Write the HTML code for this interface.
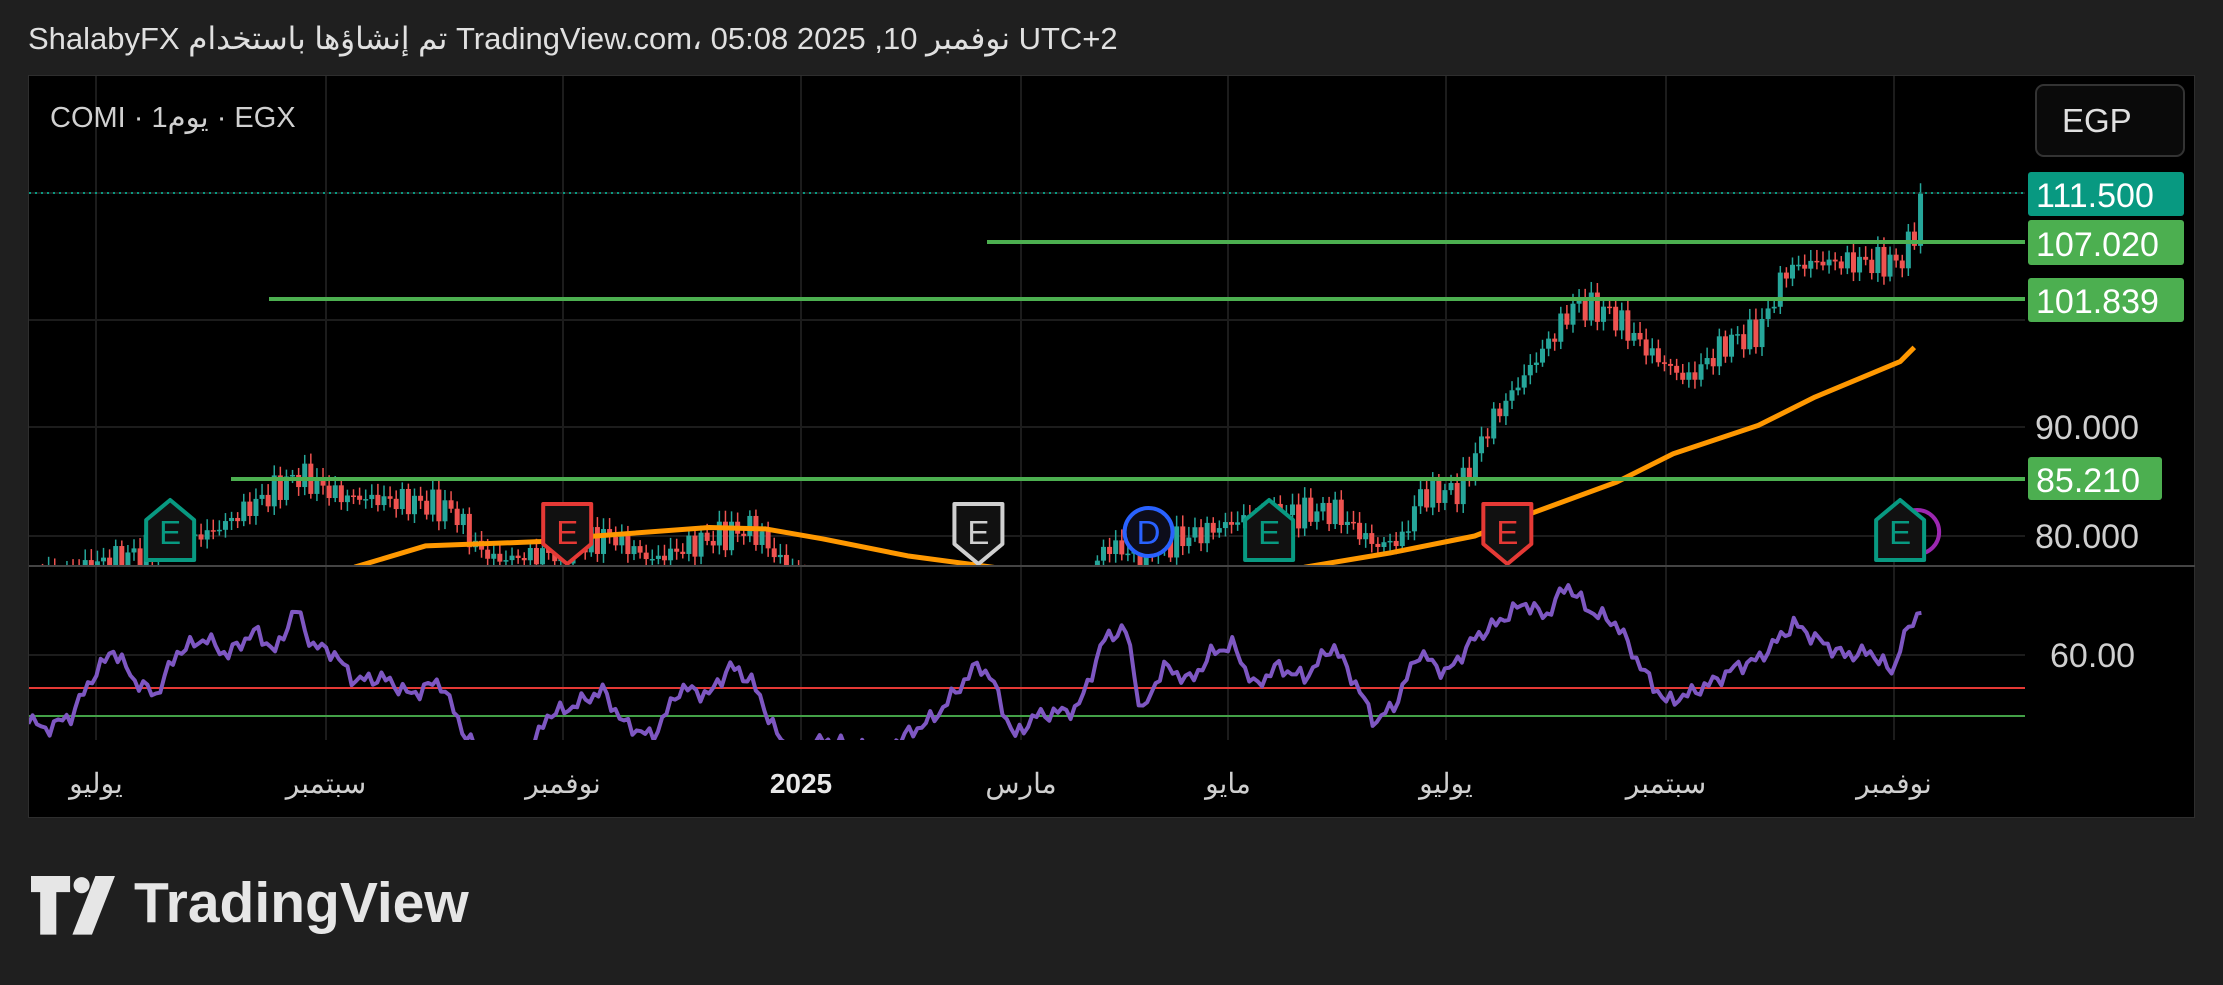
<!DOCTYPE html>
<html><head><meta charset="utf-8">
<style>
html,body{margin:0;padding:0;background:#1f1f1f;width:2223px;height:985px;overflow:hidden}
body{font-family:"Liberation Sans","Noto Sans CJK SC",sans-serif;color:#dbdbdb}
#hdr{position:absolute;left:28px;top:21px;font-size:31px;color:#e0e0e0;white-space:nowrap}
#panel{position:absolute;left:28px;top:75px;width:2167px;height:743px;background:#000;border:1px solid #2e2e2e;box-sizing:border-box}
svg{position:absolute;left:0;top:0}
</style></head><body>
<div id="hdr">ShalabyFX تم إنشاؤها باستخدام TradingView.com، 05:08 2025 ,10 نوفمبر UTC+2</div>
<div id="panel"></div>
<svg id="s" width="2223" height="985" xmlns="http://www.w3.org/2000/svg">
<defs>
<clipPath id="main"><rect x="29" y="76" width="1996" height="490"/></clipPath>
<clipPath id="rsi"><rect x="29" y="567" width="1996" height="173"/></clipPath>
</defs>
<g id="grid" stroke="#1c1c1c" stroke-width="2"></g>
<g id="chart"></g>
<text x="50" y="127" font-size="29" fill="#d0d0d0" font-family="Liberation Sans,Noto Sans CJK SC,sans-serif">COMI · 1يوم · EGX</text>
<rect x="2036" y="85" width="148" height="71" rx="8" fill="#0a0a0a" stroke="#333" stroke-width="2"/>
<text x="2062" y="132" font-size="33" fill="#e0e0e0" font-family="Liberation Sans,sans-serif">EGP</text>
<g font-family="Liberation Sans,sans-serif" font-size="34" fill="#fff">
<text x="2035" y="439" fill="#cfcfcf">90.000</text>
<text x="2035" y="548" fill="#cfcfcf">80.000</text>
<text x="2050" y="667" fill="#cfcfcf">60.00</text>
<rect x="2028" y="172" width="156" height="44" rx="3" fill="#089981"/><text x="2036" y="207">111.500</text>
<rect x="2028" y="220" width="156" height="45" rx="3" fill="#4caf50"/><text x="2036" y="256">107.020</text>
<rect x="2028" y="278" width="156" height="44" rx="3" fill="#4caf50"/><text x="2036" y="313">101.839</text>
<rect x="2028" y="457" width="134" height="43" rx="3" fill="#4caf50"/><text x="2036" y="492">85.210</text>
</g>
<g font-family="Liberation Sans,Noto Sans CJK SC,sans-serif" font-size="28" fill="#cfcfcf" text-anchor="middle">
<text x="96" y="793">يوليو</text><text x="326" y="793">سبتمبر</text><text x="563" y="793">نوفمبر</text>
<text x="801" y="793" font-weight="bold" fill="#e8e8e8">2025</text><text x="1021" y="793">مارس</text>
<text x="1228" y="793">مايو</text><text x="1446" y="793">يوليو</text><text x="1666" y="793">سبتمبر</text><text x="1894" y="793">نوفمبر</text>
</g>
<g transform="translate(31,876) scale(1.15)" fill="#e6e6e6">
<path d="M0 0h34v14h-12v37h-14v-37h-8z"/><circle cx="44" cy="8" r="7"/><path d="M56 0h17l-20 51h-17z"/>
</g>
<text x="134" y="922" font-size="57" font-weight="bold" fill="#e6e6e6" font-family="Liberation Sans,sans-serif">TradingView</text>
</svg>
<script>
var S=1.418,ch=document.getElementById('chart'),c='';
var g='';
[96,326,563,801,1021,1228,1446,1666,1894].forEach(function(x){g+='<line x1="'+x+'" y1="76" x2="'+x+'" y2="740"/>';});
[193,320,427,536,655].forEach(function(y){g+='<line x1="29" y1="'+y+'" x2="2025" y2="'+y+'"/>';});
document.getElementById('grid').innerHTML=g;
var pts=[[30,405],[80,395],[150,375],[210,335],[240,350],[300,355],[320,360],[335,385],[350,395],[390,390],[430,378],[460,395],[500,380],[530,372],[550,395],[600,430],[700,440],[760,420],[780,385],[800,390],[850,375],[880,365],[940,360],[970,385],[990,380],[1000,350],[1030,345],[1050,300],[1075,265],[1100,230],[1110,215],[1135,220],[1165,250],[1190,268],[1220,240],[1240,235],[1260,190],[1280,185],[1340,185],[1350,165],[1355,138]];
function interp(a,x){for(var i=1;i<a.length;i++){if(x<=a[i][0]){var t=(x-a[i-1][0])/(a[i][0]-a[i-1][0]);return a[i-1][1]+t*(a[i][1]-a[i-1][1]);}}return a[a.length-1][1];}
c='<g clip-path="url(#main)">';
var prev=interp(pts,30)*S;
for(var xx=30;xx<=1356;xx+=4.3){
 var yy=interp(pts,xx)*S+Math.sin(xx*0.9)*9+Math.sin(xx*2.3)*7;
 var o=prev,cl=yy,up=cl<o,col=up?'#26a69a':'#ef5350';
 var tp=Math.min(o,cl),h=Math.max(Math.abs(o-cl),1.5);
 var X=xx*S;
 c+='<line x1="'+X+'" x2="'+X+'" y1="'+(tp-5-Math.abs(Math.sin(xx*3))*6)+'" y2="'+(tp+h+4+Math.abs(Math.cos(xx*2))*5)+'" stroke="'+col+'" stroke-width="1.5"/>';
 c+='<rect x="'+(X-2.5)+'" y="'+tp+'" width="5" height="'+h+'" fill="'+col+'"/>';
 prev=yy;}
var ma=[[250,400],[300,385],[380,382],[420,378],[500,372],[540,373],[580,380],[640,392],[700,400],[760,410],[900,410],[920,400],[980,390],[1040,378],[1080,362],[1140,340],[1180,320],[1240,300],[1280,280],[1340,255],[1350,245]];
c+='<polyline fill="none" stroke="#ff9800" stroke-width="5" stroke-linejoin="round" points="'+ma.map(function(p){return p[0]*S+','+p[1]*S}).join(' ')+'"/>';
c+='<line x1="987" y1="242" x2="2025" y2="242" stroke="#4caf50" stroke-width="4"/>';
c+='<line x1="269" y1="299" x2="2025" y2="299" stroke="#4caf50" stroke-width="4"/>';
c+='<line x1="231" y1="479" x2="2025" y2="479" stroke="#4caf50" stroke-width="4"/>';
c+='<line x1="29" y1="193" x2="2025" y2="193" stroke="#089981" stroke-width="2" stroke-dasharray="2,4"/>';
function badge(x,col,up,L){var X=x*S,Y=532,w=24,s='';
 var d=up?'M'+(X-w)+' '+(Y-12)+' L'+X+' '+(Y-32)+' L'+(X+w)+' '+(Y-12)+' L'+(X+w)+' '+(Y+28)+' L'+(X-w)+' '+(Y+28)+'Z'
        :'M'+(X-w)+' '+(Y-28)+' L'+(X+w)+' '+(Y-28)+' L'+(X+w)+' '+(Y+12)+' L'+X+' '+(Y+32)+' L'+(X-w)+' '+(Y+12)+'Z';
 if(L=='D')s+='<circle cx="'+X+'" cy="'+Y+'" r="24" fill="#0d0d1a" stroke="'+col+'" stroke-width="4"/>';
 else s+='<path d="'+d+'" fill="#111" stroke="'+col+'" stroke-width="4" stroke-linejoin="round"/>';
 s+='<text x="'+X+'" y="'+(Y+12)+'" text-anchor="middle" font-size="33" font-family="Liberation Sans,sans-serif" fill="'+col+'">'+L+'</text>';return s;}
c+='<circle cx="'+(1352*S)+'" cy="532" r="22" fill="none" stroke="#9c27b0" stroke-width="4"/>';
c+=badge(120,'#089981',1,'E')+badge(400,'#e53935',0,'E')+badge(690,'#cfcfcf',0,'E')+badge(810,'#2962ff',0,'D')+badge(895,'#089981',1,'E')+badge(1063,'#e53935',0,'E')+badge(1340,'#089981',1,'E');
c+='</g>';
c+='<line x1="29" y1="566" x2="2195" y2="566" stroke="#444" stroke-width="2"/>';
c+='<line x1="29" y1="688" x2="2025" y2="688" stroke="#e53935" stroke-width="2"/>';
c+='<line x1="29" y1="716" x2="2025" y2="716" stroke="#43a047" stroke-width="2"/>';
var r=[[20,505],[30,515],[50,505],[65,478],[80,458],[95,480],[110,490],[125,460],[145,450],[160,462],[180,445],[195,460],[208,428],[220,455],[235,460],[250,480],[270,478],[290,490],[310,480],[330,522],[340,530],[375,530],[385,505],[400,500],[425,487],[440,510],[460,520],[480,485],[500,490],[515,470],[530,480],[550,522],[565,530],[580,522],[620,530],[640,518],[660,505],[690,468],[700,480],[715,520],[730,505],[760,500],[780,448],[795,445],[805,505],[820,470],[840,480],[855,460],[870,455],[885,485],[900,470],[920,478],[940,455],[955,480],[970,510],[985,495],[1000,460],[1020,475],[1040,450],[1055,440],[1075,425],[1090,435],[1105,412],[1120,430],[1140,440],[1160,475],[1175,495],[1190,490],[1210,480],[1225,470],[1240,465],[1265,440],[1280,450],[1300,462],[1320,460],[1335,475],[1340,455],[1355,428]];
var rp=[];for(var xr=20;xr<=1355;xr+=3){rp.push(xr*S+','+(interp(r,xr)*S+Math.sin(xr*1.3)*5+Math.sin(xr*0.41)*4));}
c+='<g clip-path="url(#rsi)"><polyline fill="none" stroke="#7e57c2" stroke-width="4" stroke-linejoin="round" points="'+rp.join(' ')+'"/></g>';
ch.innerHTML=c;
</script>
</body></html>
